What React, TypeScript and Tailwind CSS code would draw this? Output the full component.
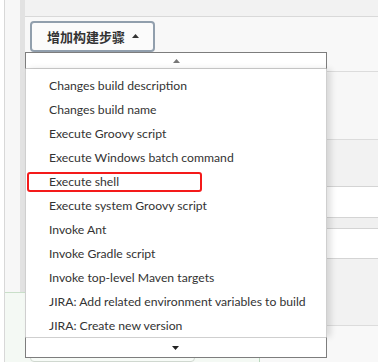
import React from "react";

const items = [
  "Changes build description",
  "Changes build name",
  "Execute Groovy script",
  "Execute Windows batch command",
  "Execute shell",
  "Execute system Groovy script",
  "Invoke Ant",
  "Invoke Gradle script",
  "Invoke top-level Maven targets",
  "JIRA: Add related environment variables to build",
  "JIRA: Create new version",
];

export default function App() {
  return (
    <div className="relative w-[378px] h-[362px] overflow-hidden bg-[#f8f8f8] flex flex-col">
      {/* upper area */}
      <div className="flex h-[292px]">
        <div className="w-[4px] bg-white border-r border-[#d8d8d8] box-content" />
        <div className="w-[15px] bg-[#f7f7f7]" />
        <div className="w-[5px] bg-[#e2e2e2]" />
        <div className="flex-1 flex flex-col">
          <div className="h-[17px] bg-[#f2f2f2] border-b border-[#d9d9d9]" />
          <div className="h-[55px] bg-[#f8f8f8] border-b border-[#dcdcdc] pl-[5px] pt-[4px]">
            <button
              className="h-[31px] w-[125px] flex items-center pl-[15px] rounded-[4px] border-2 border-[#919fad] bg-[#fbfbfb] text-[#333] font-semibold text-[13px] gap-[7px]"
              style={{ fontFamily: '"Noto Sans CJK SC", sans-serif' }}
            >
              <span>增加构建步骤</span>
              <svg width="7" height="4" viewBox="0 0 7 4" className="mt-[-1px]">
                <path d="M0 4 L3.5 0 L7 4 Z" fill="#333" />
              </svg>
            </button>
          </div>
          <div className="h-[68px] bg-[#f7f7f7] border-b border-[#dcdcdc]" />
          <div className="h-[47px] bg-[#f2f2f2] border-b border-[#d4d4d4]" />
          <div className="h-[31px] bg-white border-b border-[#d4d4d4]" />
          <div className="h-[11px] bg-[#f0f0f0] border-b border-[#d4d4d4]" />
          <div className="h-[30px] bg-white border-b border-[#d4d4d4]" />
          <div className="flex-1 bg-[#f2f2f2]" />
        </div>
      </div>
      {/* lower area */}
      <div className="flex flex-1">
        <div className="w-[4px] bg-white border-r border-[#d8d8d8] box-content" />
        <div className="w-[255px] bg-[#f4f9f4] border-t border-[#c9dfc9] border-r border-r-[#b9d9bd] flex flex-col">
          <div className="h-[47px]" />
          <div className="ml-[25px] w-[165px] flex-1 border border-[#d0d8d0] rounded-[4px] bg-[#f7fbf7]" />
        </div>
        <div className="flex-1 flex flex-col">
          <div className="h-[34px] bg-[#f2f2f2] border-b border-[#dcdcdc]" />
          <div className="flex-1 bg-[#f8f8f8]" />
        </div>
      </div>

      {/* dropdown menu overlay */}
      <div className="absolute left-[25px] top-[52px] w-[302px] h-[306px] flex flex-col">
        <div className="h-[17px] bg-white border border-[#7d7d7d] border-b-[#cfcfcf] flex items-center justify-center">
          <svg width="7" height="4" viewBox="0 0 7 4">
            <path d="M0 4 L3.5 0 L7 4 Z" fill="#777" />
          </svg>
        </div>
        <div
          className="flex-1 bg-white border-x border-[#cfcfcf] shadow-[4px_0_6px_rgba(0,0,0,0.12)] pt-[4px] flex flex-col text-[#333] text-[12.2px]"
          style={{ fontFamily: 'Lato, "Open Sans", sans-serif' }}
        >
          {items.map((t) => (
            <div key={t} className="relative h-[24px] flex items-center pl-[23px] pt-[2px] whitespace-nowrap">
              {t}
              {t === "Execute shell" && (
                <div className="absolute left-[1px] top-[3px] w-[175px] h-[20px] border-2 border-[#f41a1a] rounded-[3px]" />
              )}
            </div>
          ))}
        </div>
        <div className="h-[21px] bg-white border border-[#7d7d7d] border-t-[#cfcfcf] flex items-center justify-center">
          <svg width="7" height="4" viewBox="0 0 7 4" className="ml-[-2px]">
            <path d="M0 0 L3.5 4 L7 0 Z" fill="#222" />
          </svg>
        </div>
      </div>
    </div>
  );
}
